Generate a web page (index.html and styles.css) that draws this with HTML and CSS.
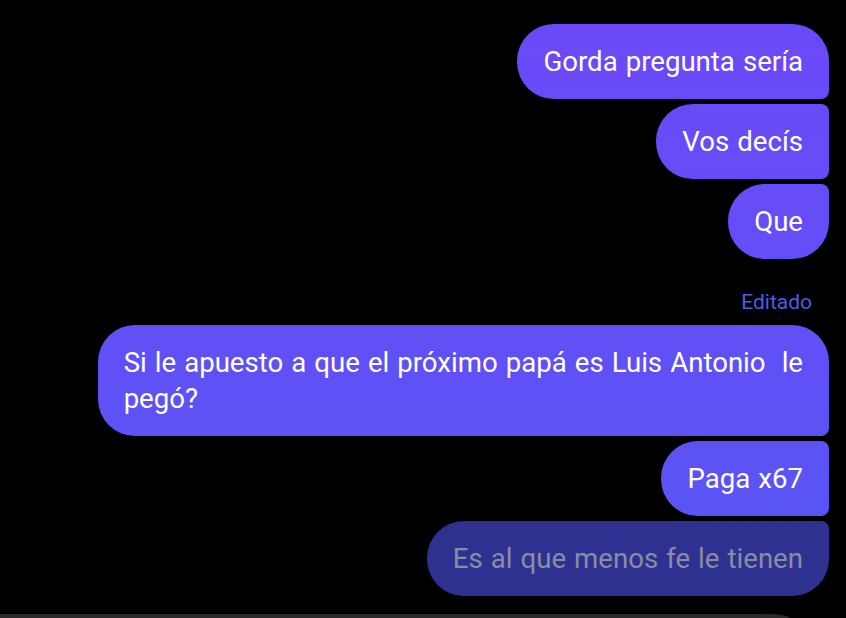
FILE: index.html
```html
<!DOCTYPE html>
<html lang="es">
<head>
  <meta charset="UTF-8" />
  <meta name="viewport" content="width=device-width, initial-scale=1.0" />
  <title>Chat</title>
  <link rel="stylesheet" href="styles.css">
</head>
<body>
  <div class="thread">
    <div class="group">
      <div class="bubble first">Gorda pregunta sería</div>
      <div class="bubble">Vos decís</div>
      <div class="bubble last">Que</div>
    </div>

    <div class="edited">Editado</div>

    <div class="group">
      <div class="bubble first">Si le apuesto a que el próximo papá es Luis Antonio &nbsp;le<br>pegó?</div>
      <div class="bubble">Paga x67</div>
      <div class="bubble last pending">Es al que menos fe le tienen</div>
    </div>
  </div>
  <div class="composer"></div>
</body>
</html>
```

FILE: styles.css
```css
body {
  margin: 0;
  height: 618px;
  overflow: hidden;
  background: #000;
  font-family: Roboto, "Liberation Sans", sans-serif;
  color: white;
}
.thread {
  display: flex;
  flex-direction: column;
  align-items: flex-end;
  padding: 24px 17px 0 0;
}
.group {
  display: flex;
  flex-direction: column;
  align-items: flex-end;
  gap: 5px;
}
.bubble {
  font-size: 27.6px;
  line-height: 36px;
  word-spacing: 1.2px;
  padding: 19.5px 26px;
  border-radius: 37px 8px 8px 37px;
  background: linear-gradient(to bottom, #6c48f8 0px, #5a54f4 520px);
  background-attachment: fixed;
  max-width: 700px;
}
.bubble.first {
  border-top-right-radius: 37px;
}
.bubble.last {
  border-bottom-right-radius: 37px;
}
.bubble.pending {
  background: #2f3190;
  color: #8a8ca6;
}
.edited {
  font-size: 21px;
  line-height: 26px;
  color: #4f5ae9;
  margin: 30px 17px 10px 0;
}
.composer {
  margin-top: 18px;
  width: 790px;
  height: 4px;
  background: #2b2b2b;
  border-top-right-radius: 26px 4px;
}
```
